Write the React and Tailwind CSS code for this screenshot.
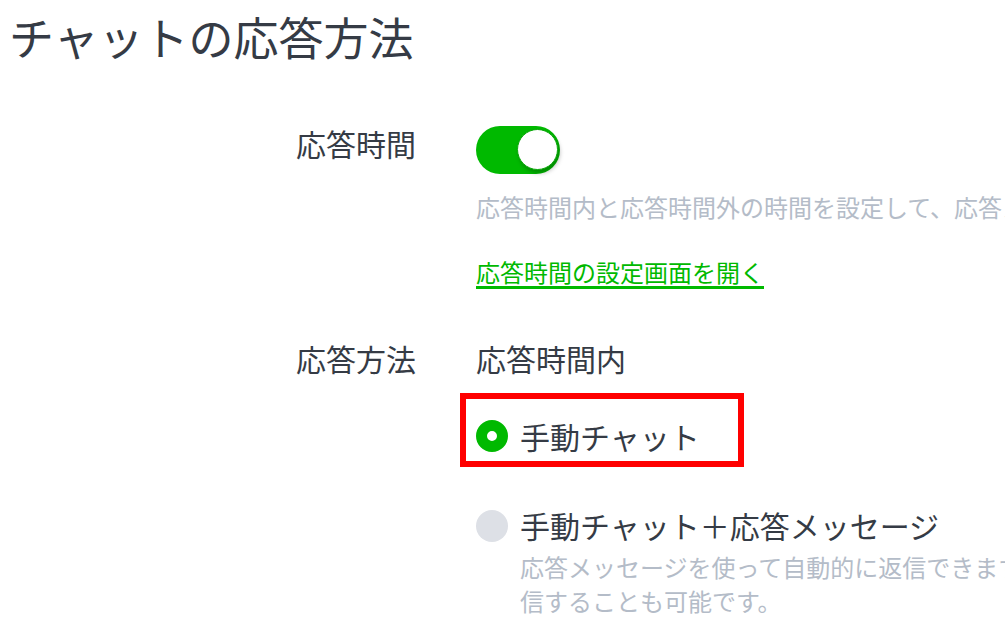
export default function App() {
  return (
    <div className="w-[1005px] h-[643px] overflow-hidden bg-white text-[#353b45] font-['Noto_Sans_CJK_JP','Noto_Sans',sans-serif]">
      <h1 className="mt-[7px] pl-[9px] text-[45px] leading-[60px] font-normal whitespace-nowrap">
        チャットの応答方法
      </h1>

      <div className="pl-[296px]">
        {/* 応答時間 */}
        <div className="mt-[59px] flex">
          <div className="w-[180px] shrink-0 text-[30px] leading-[34px]">応答時間</div>
          <div className="flex flex-col">
            <div className="w-[84px] h-[48px] rounded-full bg-[#00b900] flex items-center justify-end pr-[2px]">
              <div className="w-[41px] h-[41px] -mt-[2px] rounded-full bg-white border border-[#0aa80a] shadow-[2px_3px_4px_rgba(0,0,0,0.25)]" />
            </div>
            <p className="mt-[15px] text-[24px] leading-[36px] text-[#b4bcc8] whitespace-nowrap">
              応答時間内と応答時間外の時間を設定して、応答メッセージの送信方法を切り替えます。
            </p>
            <a href="#" className="mt-[29px] text-[24px] leading-[36px] text-[#00b900] underline underline-offset-[4px] decoration-[3px] whitespace-nowrap self-start">
              応答時間の設定画面を開く
            </a>
          </div>
        </div>

        {/* 応答方法 */}
        <div className="mt-[47px] flex">
          <div className="w-[180px] shrink-0 text-[30px] leading-[43px]">応答方法</div>
          <div className="flex flex-col">
            <div className="text-[30px] leading-[43px] whitespace-nowrap">応答時間内</div>

            <div className="mt-[13px] -ml-[16px] w-[284px] h-[74px] border-[6px] border-[#ff0000] flex items-center pl-[10px] pt-[12px]">
              <span className="w-[32px] h-[32px] rounded-full border-[11px] border-[#00b900] bg-white shrink-0" />
              <span className="ml-[12px] text-[30px] leading-[40px] whitespace-nowrap">手動チャット</span>
            </div>

            <div className="mt-[38px] flex items-center">
              <span className="w-[32px] h-[32px] mt-[2px] rounded-full bg-[#dde0e6] shrink-0" />
              <span className="ml-[12px] text-[30px] leading-[40px] whitespace-nowrap">手動チャット＋応答メッセージ</span>
            </div>
            <p className="mt-[5px] ml-[44px] text-[24px] leading-[34px] text-[#b4bcc8] whitespace-nowrap">
              応答メッセージを使って自動的に返信できます。手動で返
              <br />
              信することも可能です。
            </p>
          </div>
        </div>
      </div>
    </div>
  );
}
